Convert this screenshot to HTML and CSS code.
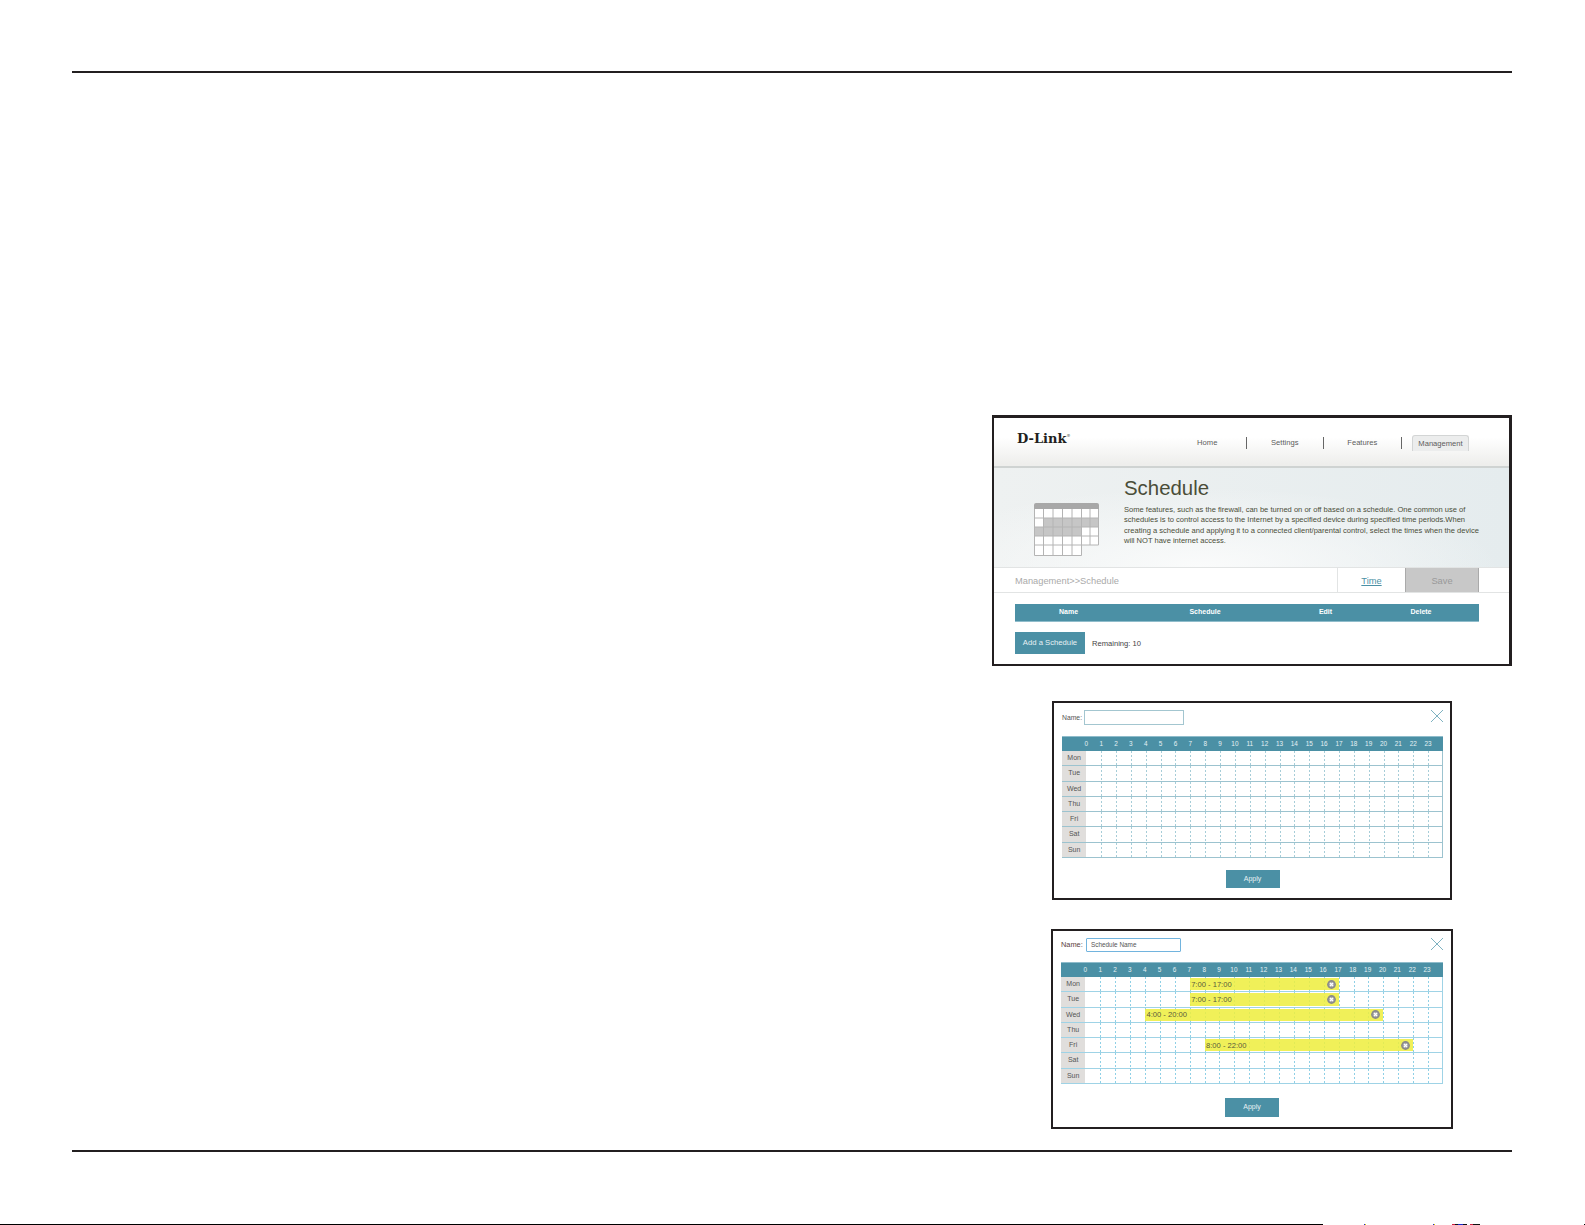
FILE: index.html
```html
<!DOCTYPE html>
<html lang="en">
<head>
  <meta charset="UTF-8">
  <meta name="viewport" content="width=device-width, initial-scale=1.0">
  <title>Schedule</title>
  <link rel="stylesheet" href="styles.css">
</head>
<body>
  <div class="page">
    <div class="rule rule-top"></div>

    <div class="figures">
      <div class="frame frame-main">
        <div class="topbar">
          <div class="logo">D-Link<sup>®</sup></div>
          <div class="nav">
            <span class="nav-item">Home</span>
            <span class="nav-item">Settings</span>
            <span class="nav-item">Features</span>
            <span class="nav-tab">Management</span>
          </div>
        </div>

        <div class="hero">
          <svg class="hero-icon" viewBox="0 0 65 53" width="65" height="53">
            <path d="M0 6V2a2 2 0 0 1 2-2h61a2 2 0 0 1 2 2v4z" fill="#a8a8a8"/>
            <rect x="0.5" y="6" width="64" height="36" fill="#fff"/>
            <rect x="0.5" y="42" width="47" height="10.5" fill="#fff"/>
            <rect x="9.5" y="15" width="55" height="9" fill="#c6c6c6"/>
            <rect x="0.5" y="24" width="47" height="9" fill="#c6c6c6"/>
            <path d="M0.5 6V52.5H47.5V42H64.5V6M0.5 15H64.5M0.5 24H64.5M0.5 33H64.5M0.5 42H47.5M9.5 6V52.5M19 6V52.5M28.5 6V52.5M38 6V52.5M47.5 6V42M56 6V42" fill="none" stroke="#b4b4b4" stroke-width="1"/>
          </svg>
          <div class="hero-text">
            <h1>Schedule</h1>
            <p>Some features, such as the firewall, can be turned on or off based on a schedule. One common use of<br>
            schedules is to control access to the Internet by a specified device during specified time periods.When<br>
            creating a schedule and applying it to a connected client/parental control, select the times when the device<br>
            will NOT have internet access.</p>
          </div>
        </div>

        <div class="crumbs">
          <span class="crumb-text">Management&gt;&gt;Schedule</span>
          <a class="crumb-link" href="#">Time</a>
          <span class="crumb-save">Save</span>
        </div>

        <div class="list-head">
          <span>Name</span>
          <span>Schedule</span>
          <span>Edit</span>
          <span>Delete</span>
        </div>

        <div class="add-row">
          <span class="btn-add">Add a Schedule</span>
          <span class="remaining">Remaining: 10</span>
        </div>
      </div>

      <div class="frame frame-dialog" id="dialog-empty">
        <div class="name-row">
          <label class="name-label">Name:</label>
          <span class="name-input"></span>
          <svg class="close" viewBox="0 0 12 12" width="12" height="12"><path d="M0 0L12 12M12 0L0 12" stroke="#6fa9ba" stroke-width="0.9"/></svg>
        </div>
        <div class="grid-wrap"></div>
        <span class="btn-apply">Apply</span>
      </div>

      <div class="frame frame-dialog filled" id="dialog-filled">
        <div class="name-row">
          <label class="name-label">Name:</label>
          <span class="name-input">Schedule Name</span>
          <svg class="close" viewBox="0 0 12 12" width="12" height="12"><path d="M0 0L12 12M12 0L0 12" stroke="#6fa9ba" stroke-width="0.9"/></svg>
        </div>
        <div class="grid-wrap"></div>
        <span class="btn-apply">Apply</span>
      </div>
    </div>

    <div class="rule rule-bottom"></div>
    <div class="scan-edge"></div>
  </div>
  <script src="script.js"></script>
</body>
</html>
```

FILE: styles.css
```css
* {
  box-sizing: border-box;
}

body {
  margin: 0;
  background-color: #fff;
  font-family: "Liberation Sans", Arial, sans-serif;
}

.page {
  height: 1225px;
  padding-top: 71px;
  overflow: hidden;
}

.rule {
  height: 2px;
  margin: 0 73px 0 72px;
  background-color: #231f20;
}

.figures {
  display: flex;
  flex-direction: column;
  align-items: center;
  width: 520px;
  margin: 342px 0 0 992px;
}

.frame {
  background-color: #fff;
  border: 2px solid #231f20;
}

.frame-main {
  width: 520px;
  height: 251px;
  border-width: 3px 3px 2px 2px;
}

/* top bar */
.topbar {
  display: flex;
  align-items: flex-start;
  justify-content: space-between;
  height: 50px;
  padding-left: 23px;
  background: linear-gradient(to bottom, #fff 40%, #eeeeec 96%);
  border-bottom: 2px solid #cfd3d2;
}

.logo {
  margin-top: 12px;
  font-family: "DejaVu Serif", serif;
  font-size: 13px;
  font-weight: bold;
  letter-spacing: 0;
  line-height: 18px;
  color: #231f20;
}

.logo sup {
  font-size: 4px;
  font-weight: normal;
  line-height: 0;
  vertical-align: 6px;
}

.nav {
  display: flex;
  align-items: center;
  height: 16px;
  margin-top: 17px;
  margin-right: 40px;
  font-size: 7.6px;
  color: #5c5c5c;
}

.nav-item {
  width: 77.5px;
  height: 12px;
  line-height: 12px;
  text-align: center;
  border-right: 1px solid #666;
}

.nav-tab {
  width: 57px;
  height: 16px;
  margin-left: 10.5px;
  line-height: 16px;
  text-align: center;
  background-color: #eceded;
  border: 1px solid #d3d5d5;
  border-bottom: none;
  border-radius: 3px 3px 0 0;
}

/* hero */
.hero {
  display: flex;
  height: 99px;
  padding-left: 40px;
  background: radial-gradient(ellipse 300px 80px at 40% 100%, #fafbfb 0%, rgba(250, 251, 251, 0) 100%), linear-gradient(to right, #eef1f1, #e5ecee);
}

.hero-icon {
  flex: none;
  margin-top: 35px;
}

.hero-text {
  margin-left: 25px;
  padding-top: 8px;
  color: #4a4d38;
}

.hero-text h1 {
  margin: 0;
  font-size: 20.4px;
  font-weight: normal;
  line-height: 24px;
}

.hero-text p {
  margin: 4.5px 0 0;
  font-size: 7.55px;
  line-height: 10.6px;
  white-space: nowrap;
}

/* breadcrumb row */
.crumbs {
  display: flex;
  align-items: stretch;
  height: 26px;
  padding: 0 30px 0 21px;
  border-top: 1px solid #e2e4e4;
  border-bottom: 1px solid #e2e4e4;
  font-size: 9.3px;
  line-height: 26px;
}

.crumb-text {
  flex: 1;
  color: #aaa;
}

.crumb-link {
  width: 68px;
  text-align: center;
  color: #4b90a5;
  border-left: 1px solid #e2e4e4;
}

.crumb-save {
  width: 74px;
  text-align: center;
  color: #999;
  background-color: #c8c8c8;
  border-left: 1px solid #aaa;
  border-right: 1px solid #aaa;
}

/* list */
.list-head {
  display: grid;
  grid-template-columns: 107px 166px 75px 116px;
  width: 464px;
  height: 18px;
  margin: 11px 0 0 21px;
  background-color: #4b90a5;
  border-bottom: 1px solid #8fbccb;
  font-size: 7px;
  font-weight: bold;
  line-height: 16px;
  text-align: center;
  color: #fff;
}

.add-row {
  display: flex;
  align-items: center;
  margin: 10px 0 0 21px;
}

.btn-add {
  width: 70px;
  height: 22px;
  font-size: 7.7px;
  line-height: 22px;
  text-align: center;
  color: #e8f1f4;
  background-color: #4b90a5;
}

.remaining {
  margin-left: 7px;
  font-size: 7.6px;
  color: #444;
}

/* schedule dialogs */
.frame-dialog {
  display: flex;
  flex-direction: column;
  width: 400px;
  height: 199px;
  margin-top: 35px;
  padding: 7px 7px 0 8px;
}

.filled {
  width: 402px;
  height: 200px;
  margin-top: 29px;
  padding: 7px 8px 0 8px;
}

.name-row {
  display: flex;
  align-items: flex-start;
  height: 15px;
}

.name-label {
  width: 22px;
  font-size: 6.8px;
  line-height: 15px;
  color: #555;
}

.name-input {
  width: 100px;
  height: 15px;
  padding-left: 4px;
  font-size: 6.4px;
  line-height: 12px;
  color: #555;
  border: 1px solid #a3c6d0;
}

.close {
  margin-left: auto;
}

.filled .name-row {
  height: 14px;
}

.filled .name-label {
  width: 25px;
  font-size: 7.4px;
  line-height: 14px;
  color: #5a3d3d;
}

.filled .name-input {
  width: 95px;
  height: 14px;
  border-color: #72b4de;
  border-radius: 1px;
}

.grid-wrap {
  margin-top: 11px;
}

.filled .grid-wrap {
  margin-top: 10px;
}

.hours {
  display: grid;
  grid-template-columns: 16.9px repeat(24, 14.86px);
  height: 15px;
  background-color: #4b90a5;
  border-top: 1px solid #8fbccb;
  font-size: 6.4px;
  line-height: 14px;
  text-align: center;
  color: #e6f1f4;
}

.day-row {
  display: grid;
  grid-template-columns: 24.3px repeat(24, 1fr);
  grid-template-rows: 1fr;
  height: 15.3px;
  border-bottom: 1px solid #9cc3cf;
}

.day-name {
  grid-column: 1;
  grid-row: 1;
  font-size: 7px;
  line-height: 14px;
  text-align: center;
  color: #555;
  background-color: #e0dedc;
}

.slot {
  grid-row: 1;
  background-image: linear-gradient(to bottom, #a6cdd8 50%, transparent 50%);
  background-repeat: repeat-y;
  background-size: 1px 4px;
}

.slot-first {
  background-image: none;
}

.slot-last {
  border-right: 1px solid #9cc3cf;
}

.filled .day-row {
  border-bottom-color: #9fd3e6;
}

.filled .slot {
  background-image: linear-gradient(to bottom, #8fd0e6 50%, transparent 50%);
}

.filled .slot-first {
  background-image: none;
}

.filled .slot-last {
  border-right-color: #9fd3e6;
}

.bar {
  display: flex;
  align-items: center;
  justify-content: space-between;
  grid-row: 1;
  z-index: 1;
  margin: 1px 0;
  padding: 0 3px 0 1.5px;
  font-size: 7.6px;
  color: #5a5a3c;
  background-color: rgba(238, 238, 62, 0.86);
}

.bar-x {
  flex: none;
}

.btn-apply {
  align-self: center;
  width: 54px;
  height: 18px;
  margin-top: 12px;
  font-size: 7px;
  line-height: 18px;
  text-align: center;
  color: #e8f1f4;
  background-color: #4b90a5;
}

.filled .btn-apply {
  height: 19px;
  margin-top: 14px;
}

.rule-bottom {
  margin-top: 21px;
}

/* stray scan pixels along the bottom edge */
.scan-edge {
  height: 1px;
  margin-top: 72px;
  background: linear-gradient(to right,
    #000 0 1323px, #fff 1323px 1364px, #1a2ad0 1364px 1365px, #e0d000 1365px 1366px,
    #fff 1366px 1433px, #1a2ad0 1433px 1434px, #e0d000 1434px 1435px,
    #fff 1435px 1452px, #d02040 1452px 1455px, #111 1455px 1458px, #1a2ad0 1458px 1463px,
    #111 1463px 1467px, #fff 1467px 1470px, #d02040 1470px 1473px, #111 1473px 1480px,
    #fff 1480px 1584px, #000 1584px 1585px);
}
```

FILE: script.js
```js
const days = ['Mon', 'Tue', 'Wed', 'Thu', 'Fri', 'Sat', 'Sun'];

// start and end hour of each block, by day
const filledBlocks = {
  Mon: [7, 17],
  Tue: [7, 17],
  Wed: [4, 20],
  Fri: [8, 22]
};

function closeIcon() {
  return '<svg class="bar-x" viewBox="0 0 9 9" width="9" height="9">' +
    '<circle cx="4.5" cy="4.5" r="4.4" fill="#8a8a8a"/>' +
    '<circle cx="4.5" cy="4.5" r="2.8" fill="#a8a8a8"/>' +
    '<path d="M3 3L6 6M6 3L3 6" stroke="#fff" stroke-width="1.3"/></svg>';
}

function buildGrid(wrap, blocks) {
  let html = '<div class="hours"><span></span>';
  for (let h = 0; h < 24; h++) {
    html += '<span>' + h + '</span>';
  }
  html += '</div>';

  days.forEach(day => {
    html += '<div class="day-row"><span class="day-name">' + day + '</span>';
    const block = blocks[day];
    if (block) {
      html += '<div class="bar" style="grid-column: ' + (block[0] + 2) + ' / ' + (block[1] + 2) + '">' +
        '<span>' + block[0] + ':00 - ' + block[1] + ':00</span>' + closeIcon() + '</div>';
    }
    for (let h = 0; h < 24; h++) {
      let cls = 'slot';
      if (h === 0) cls += ' slot-first';
      if (h === 23) cls += ' slot-last';
      html += '<div class="' + cls + '" style="grid-column: ' + (h + 2) + '"></div>';
    }
    html += '</div>';
  });

  wrap.innerHTML = html;
}

buildGrid(document.querySelector('#dialog-empty .grid-wrap'), {});
buildGrid(document.querySelector('#dialog-filled .grid-wrap'), filledBlocks);
```
